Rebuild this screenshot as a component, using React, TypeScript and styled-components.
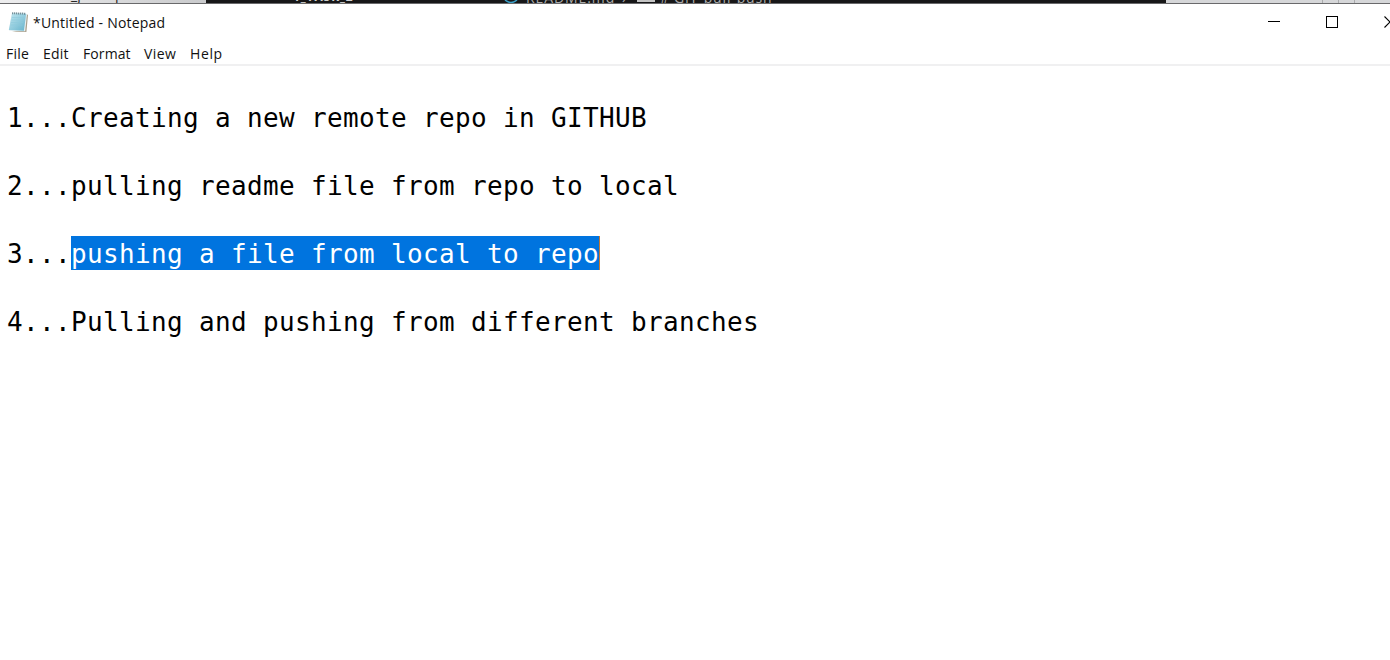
import React from "react";
import styled, { createGlobalStyle } from "styled-components";

const Global = createGlobalStyle`
  html, body, #root { margin: 0; height: 100%; }
  body { overflow: hidden; background: #fff; }
  * { box-sizing: border-box; }
`;

const Screen = styled.div`
  width: 1390px;
  height: 660px;
  display: flex;
  flex-direction: column;
  overflow: hidden;
  background: #fff;
`;

const Backdrop = styled.div`
  display: flex;
  flex: none;
  height: 4px;
  overflow: hidden;
  border-bottom: 1px solid #69696b;
`;

const BackPane = styled.div<{ $width: number; $bg: string }>`
  position: relative;
  flex: none;
  width: ${(p) => p.$width}px;
  height: 4px;
  overflow: hidden;
  background: ${(p) => p.$bg};
`;

const Peek = styled.span<{
  $left: number;
  $color: string;
  $bold?: boolean;
  $drop?: number;
  $size?: number;
  $spacing?: number;
}>`
  position: absolute;
  left: ${(p) => p.$left}px;
  bottom: ${(p) => -(p.$drop ?? 0)}px;
  white-space: pre;
  font: ${(p) => (p.$bold ? 700 : 400)} ${(p) => p.$size ?? 14}px/18px "Open Sans", sans-serif;
  letter-spacing: ${(p) => p.$spacing ?? 0}px;
  color: ${(p) => p.$color};
`;

const PeekIcon = styled.svg`
  position: absolute;
  left: 298px;
  bottom: 0;
`;

const Dash = styled.i`
  position: absolute;
  left: 431px;
  top: 0;
  width: 18px;
  height: 2px;
  background: #c4c4c4;
`;

const Divider = styled.i<{ $left: number }>`
  position: absolute;
  left: ${(p) => p.$left}px;
  width: 1px;
  height: 4px;
  background: #aaabad;
`;

const TitleBar = styled.header`
  display: flex;
  flex: none;
  align-items: flex-start;
  height: 37px;
  padding-left: 8px;
`;

const Title = styled.h1`
  flex: 1;
  margin: 0 0 0 4px;
  padding-top: 9px;
  font: 400 14px/20px "Open Sans", "Noto Sans", sans-serif;
  letter-spacing: 0.2px;
  color: #111;
  white-space: nowrap;
`;

const AppIcon = styled.svg`
  flex: none;
  margin-top: 7px;
`;

const Controls = styled.div`
  display: flex;
  flex: none;
  height: 36px;
  width: 145px;
  overflow: hidden;
`;

const ControlButton = styled.button`
  flex: none;
  width: 58px;
  height: 36px;
  padding: 0;
  border: 0;
  background: none;
  display: grid;
  place-items: center;
`;

const MenuBar = styled.nav`
  display: flex;
  flex: none;
  height: 25px;
  padding-left: 6px;
  gap: 14px;
  border-bottom: 2px solid #f0f0f1;
`;

const MenuItem = styled.span<{ $width: number; $spacing?: number }>`
  width: ${(p) => p.$width}px;
  font: 400 14px/25px "Open Sans", "Noto Sans", sans-serif;
  letter-spacing: ${(p) => p.$spacing ?? 0.2}px;
  color: #111;
  white-space: nowrap;
`;

const Editor = styled.main`
  flex: 1;
  padding: 34px 0 0 7px;
  font-family: "DejaVu Sans Mono", monospace;
  font-size: 26px;
  line-height: 36px;
  letter-spacing: 0.347px;
  color: #000;
`;

const Line = styled.div`
  display: flex;
  height: 34px;
  margin-bottom: 34px;
  white-space: pre;
`;

const Selection = styled.span`
  height: 34px;
  width: 529px;
  background: #0074df;
  color: #fff;
  border-right: 1px solid #c87830;
`;

const NotepadIcon = () => (
  <AppIcon width="21" height="22" viewBox="0 0 21 22">
    <defs>
      <linearGradient id="page" x1="0" y1="0" x2="1" y2="1">
        <stop offset="0" stopColor="#c2e7f0" />
        <stop offset="1" stopColor="#66b3cc" />
      </linearGradient>
    </defs>
    <path d="M18.5 3 20 4 18.4 21 4 20.6 16 19Z" fill="#a89f8c" />
    <path d="M4 2.5 19 3 17.2 20.2 1 19.4Z" fill="#e5eef0" />
    <path d="M4 2.3 18.2 2.8 15.9 19.8 .8 19Z" fill="url(#page)" />
    <path d="M4.2 2.2 18.1 2.7" stroke="#607c86" strokeWidth="2" strokeDasharray="1 1" />
    <path d="M4 6.5h12M3.5 9h12M3 11.5h12M2.6 14h12" stroke="#8dcadb" strokeWidth=".6" />
  </AppIcon>
);

export default function App() {
  return (
    <Screen>
      <Global />
      <Backdrop>
        <BackPane $width={206} $bg="linear-gradient(90deg, #eeeeef, #c9cacc)">
          <Peek $left={71} $color="#222">_j</Peek>
          <Peek $left={115} $color="#222">p</Peek>
        </BackPane>
        <BackPane $width={960} $bg="#171718">
          <Peek $left={87} $color="#d0d0d0" $drop={2} $size={12} $spacing={0.9} $bold>
            1_TASK_2
          </Peek>
          <PeekIcon width="14" height="4" viewBox="0 0 14 4">
            <path d="M1 0Q7 5 13 0" fill="none" stroke="#39a0c8" strokeWidth="1.5" />
          </PeekIcon>
          <Peek $left={320} $color="#aaa" $drop={3} $spacing={0.9}>README.md</Peek>
          <Peek $left={416} $color="#aaa" $drop={3}>›</Peek>
          <Dash />
          <Peek $left={454} $color="#aaa" $drop={3}>#</Peek>
          <Peek $left={468} $color="#aaa" $drop={3} $spacing={0.85}>GIT-pull-push</Peek>
        </BackPane>
        <BackPane $width={224} $bg="#d6d7d9">
          <Divider $left={156} />
          <Divider $left={172} />
          <Divider $left={188} />
        </BackPane>
      </Backdrop>
      <TitleBar>
        <NotepadIcon />
        <Title>*Untitled - Notepad</Title>
        <Controls>
          <ControlButton aria-label="Minimize">
            <svg width="12" height="12" shapeRendering="crispEdges">
              <path d="M0 5.5h12" stroke="#000" />
            </svg>
          </ControlButton>
          <ControlButton aria-label="Maximize">
            <svg width="12" height="12" shapeRendering="crispEdges">
              <path d="M.5.5h11v11H.5z" fill="none" stroke="#000" />
            </svg>
          </ControlButton>
          <ControlButton aria-label="Close">
            <svg width="12" height="12">
              <path d="M.5.5l11 11M11.5.5l-11 11" stroke="#000" strokeWidth="1.1" />
            </svg>
          </ControlButton>
        </Controls>
      </TitleBar>
      <MenuBar>
        <MenuItem $width={23}>File</MenuItem>
        <MenuItem $width={26}>Edit</MenuItem>
        <MenuItem $width={47} $spacing={0.1}>Format</MenuItem>
        <MenuItem $width={32} $spacing={0.4}>View</MenuItem>
        <MenuItem $width={32} $spacing={0.6}>Help</MenuItem>
      </MenuBar>
      <Editor>
        <Line>1...Creating a new remote repo in GITHUB</Line>
        <Line>2...pulling readme file from repo to local</Line>
        <Line>
          3...<Selection>pushing a file from local to repo</Selection>
        </Line>
        <Line>4...Pulling and pushing from different branches</Line>
      </Editor>
    </Screen>
  );
}
